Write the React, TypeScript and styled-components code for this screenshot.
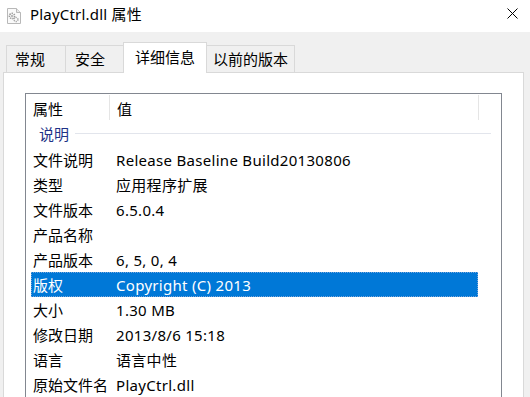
import React from "react";
import styled, { createGlobalStyle } from "styled-components";

const Global = createGlobalStyle`
  html, body { margin: 0; padding: 0; background: #f0f0f0; }
  body { font-family: "Noto Sans", "Noto Sans CJK SC", sans-serif; color: #000; }
  * { box-sizing: border-box; }
`;

const Window = styled.div`
  width: 530px;
  height: 397px;
  overflow: hidden;
  display: flex;
  flex-direction: column;
  background: #f0f0f0;
`;

const TitleBar = styled.div`
  height: 32px;
  flex: none;
  background: #fff;
  display: flex;
  align-items: center;
  padding-left: 7px;
`;

const TitleText = styled.span`
  margin-left: 9px;
  font-size: 15px;
  letter-spacing: 0.2px;
  line-height: 1;
  margin-top: -4px;
`;

const CloseBtn = styled.div`
  margin-left: auto;
  width: 34px;
  height: 32px;
  display: flex;
  align-items: center;
  justify-content: center;
  margin-top: -5px;
  margin-right: 1px;
`;

const Body = styled.div`
  flex: 1;
  display: flex;
  flex-direction: column;
  padding: 10px 6px 0 3px;
`;

const TabStrip = styled.div`
  display: flex;
  align-items: flex-end;
  height: 31px;
  padding-left: 3px;
  position: relative;
  z-index: 1;
  margin-bottom: -1px;
`;

const Tab = styled.div<{ $w: number; $pl: number; $active?: boolean }>`
  width: ${(p) => p.$w}px;
  height: ${(p) => (p.$active ? 31 : 28)}px;
  margin-left: -1px;
  border: 1px solid #d9d9d9;
  border-bottom: ${(p) => (p.$active ? "none" : "1px solid #d9d9d9")};
  background: ${(p) => (p.$active ? "#fff" : "#f0f0f0")};
  display: flex;
  align-items: center;
  padding-left: ${(p) => p.$pl}px;
  font-size: 15px;
  white-space: nowrap;
  padding-bottom: ${(p) => (p.$active ? 3 : 1)}px;
  &:first-child { margin-left: 0; }
`;

const Panel = styled.div`
  flex: 1;
  background: #fff;
  border: 1px solid #d9d9d9;
  padding: 20px 0 0 21px;
`;

const ListView = styled.div`
  width: 477px;
  height: 400px;
  border: 1px solid #828790;
  background: #fff;
`;

const Header = styled.div`
  height: 26px;
  display: flex;
  align-items: stretch;
  font-size: 15px;
`;

const HeaderCell = styled.div<{ $w: number }>`
  width: ${(p) => p.$w}px;
  flex: none;
  display: flex;
  align-items: center;
  padding-left: 7px;
  padding-top: 2px;
  border-right: 1px solid #e5e5e5;
  margin-top: 1px;
`;

const Group = styled.div`
  height: 27px;
  display: flex;
  align-items: center;
  padding-left: 13px;
  padding-right: 10px;
  color: #1e3287;
  font-size: 15px;
`;

const GroupLine = styled.div`
  flex: 1;
  height: 1px;
  background: #e2e5ec;
  margin-left: 6px;
`;

const Row = styled.div<{ $selected?: boolean }>`
  margin-left: 5px;
  width: 447px;
  height: 25px;
  display: flex;
  align-items: center;
  font-size: 15px;
  background: ${(p) => (p.$selected ? "#0078d7" : "transparent")};
  color: ${(p) => (p.$selected ? "#fff" : "#000")};
  outline: ${(p) => (p.$selected ? "1px dotted #7aa6d9" : "none")};
  outline-offset: -1px;
`;

const NameCell = styled.div`
  width: 83px;
  flex: none;
  padding-left: 2px;
  white-space: nowrap;
`;

const ValueCell = styled.div`
  padding-left: 2px;
  white-space: nowrap;
  letter-spacing: 0.3px;
`;

const rows: [string, string][] = [
  ["文件说明", "Release Baseline Build20130806"],
  ["类型", "应用程序扩展"],
  ["文件版本", "6.5.0.4"],
  ["产品名称", ""],
  ["产品版本", "6, 5, 0, 4"],
  ["版权", "Copyright (C) 2013"],
  ["大小", "1.30 MB"],
  ["修改日期", "2013/8/6 15:18"],
  ["语言", "语言中性"],
  ["原始文件名", "PlayCtrl.dll"],
];

const FileIcon = () => (
  <svg width="14" height="16" viewBox="0 0 14 16">
    <path d="M0.5 0.5 H9.5 L13.5 4.5 V15.5 H0.5 Z" fill="#fafafa" stroke="#b8b8b8" />
    <path d="M9.5 0.5 V4.5 H13.5" fill="#e8e8e8" stroke="#b8b8b8" />
    <circle cx="5" cy="8" r="2.6" fill="none" stroke="#9a9a9a" strokeWidth="1.6" strokeDasharray="1.4 0.9" />
    <circle cx="5" cy="8" r="0.9" fill="#9a9a9a" />
    <circle cx="9" cy="11.5" r="2" fill="none" stroke="#a8a8a8" strokeWidth="1.4" strokeDasharray="1.2 0.8" />
  </svg>
);

const CloseIcon = () => (
  <svg width="11" height="11" viewBox="0 0 11 11">
    <path d="M0.5 0.5 L10.5 10.5 M10.5 0.5 L0.5 10.5" stroke="#000" strokeWidth="1" />
  </svg>
);

export default function App() {
  return (
    <>
      <Global />
      <Window>
        <TitleBar>
          <FileIcon />
          <TitleText>PlayCtrl.dll 属性</TitleText>
          <CloseBtn>
            <CloseIcon />
          </CloseBtn>
        </TitleBar>
        <Body>
          <TabStrip>
            <Tab $w={60} $pl={8}>常规</Tab>
            <Tab $w={59} $pl={9}>安全</Tab>
            <Tab $w={84} $pl={11} $active>详细信息</Tab>
            <Tab $w={89} $pl={6}>以前的版本</Tab>
          </TabStrip>
          <Panel>
            <ListView>
              <Header>
                <HeaderCell $w={84}>属性</HeaderCell>
                <HeaderCell $w={369}>值</HeaderCell>
              </Header>
              <Group>
                说明
                <GroupLine />
              </Group>
              {rows.map(([k, v]) => (
                <Row key={k} $selected={k === "版权"}>
                  <NameCell>{k}</NameCell>
                  <ValueCell>{v}</ValueCell>
                </Row>
              ))}
            </ListView>
          </Panel>
        </Body>
      </Window>
    </>
  );
}
